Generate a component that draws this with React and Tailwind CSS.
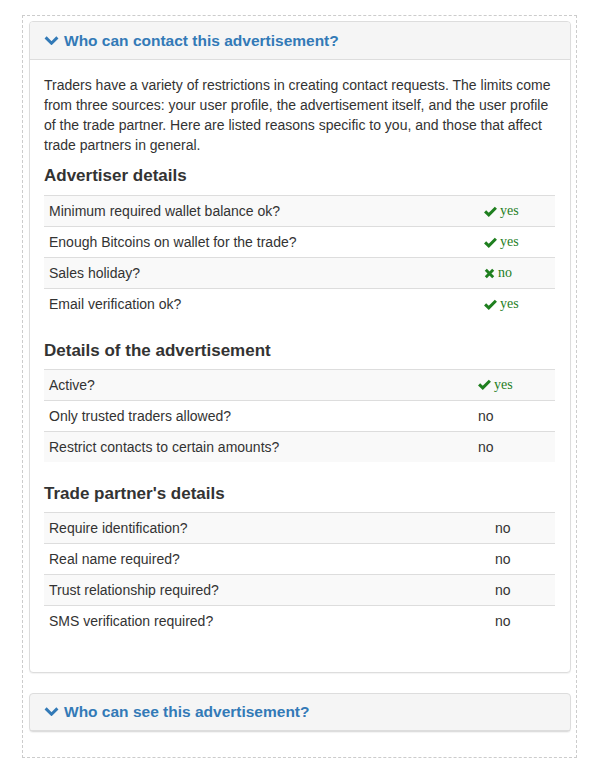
import React from 'react';

const advertiser = [
  { label: 'Minimum required wallet balance ok?', ok: true },
  { label: 'Enough Bitcoins on wallet for the trade?', ok: true },
  { label: 'Sales holiday?', ok: false },
  { label: 'Email verification ok?', ok: true },
];

const advertisement = [
  { label: 'Active?', ok: true },
  { label: 'Only trusted traders allowed?', plain: 'no' },
  { label: 'Restrict contacts to certain amounts?', plain: 'no' },
];

const partner = [
  { label: 'Require identification?', plain: 'no' },
  { label: 'Real name required?', plain: 'no' },
  { label: 'Trust relationship required?', plain: 'no' },
  { label: 'SMS verification required?', plain: 'no' },
];

function Chevron() {
  return (
    <svg width="15" height="9" viewBox="0 0 15 9" className="shrink-0">
      <path d="M1.6 1.4 L7.5 7.2 L13.4 1.4" fill="none" stroke="#337ab7" strokeWidth="3" />
    </svg>
  );
}

function Status({ ok }) {
  return (
    <span className="inline-flex items-center gap-[3px] h-[20px] align-top text-[#1f7f1f] font-['Liberation_Serif',serif] text-[14px] leading-[20px]">
      {ok ? (
        <svg width="13" height="11" viewBox="0 0 13 11">
          <path d="M1.1 5.3 L4.8 8.9 L11.9 1.7" fill="none" stroke="#1f7f1f" strokeWidth="3" />
        </svg>
      ) : (
        <svg width="11" height="11" viewBox="0 0 11 11">
          <path d="M1.8 1.8 L9.2 9.2 M9.2 1.8 L1.8 9.2" fill="none" stroke="#1f7f1f" strokeWidth="2.9" />
        </svg>
      )}
      {ok ? 'yes' : 'no'}
    </span>
  );
}

function DetailTable({ rows, colWidth, gap = 'mb-[20px]' }) {
  return (
    <table className={`w-full border-collapse ${gap}`}>
      <tbody>
        {rows.map((r, i) => (
          <tr key={r.label} className={i % 2 === 0 ? 'bg-[#f9f9f9]' : 'bg-white'}>
            <td className="border-t border-[#ddd] px-[5px] py-[5px] h-[31px] leading-[20px]">{r.label}</td>
            <td className="border-t border-[#ddd] px-[5px] py-[5px] h-[31px] leading-[20px]" style={{ width: colWidth }}>
              {r.plain ? r.plain : <Status ok={r.ok} />}
            </td>
          </tr>
        ))}
      </tbody>
    </table>
  );
}

export default function App() {
  return (
    <div className="pl-[22px] pt-[15px] pb-[20px] bg-white font-['Liberation_Sans',Arial,sans-serif] text-[14px] text-[#333]">
      <div className="w-[555px] border border-dashed border-[#ccc] pl-[6px] pr-[5px] pt-[5px] pb-[25px]">

        {/* Expanded panel */}
        <div className="rounded-[4px] border border-[#ddd] bg-white shadow-[0_1px_1px_rgba(0,0,0,0.05)]">
          <div className="flex items-center gap-[5px] bg-[#f5f5f5] border-b border-[#ddd] rounded-t-[3px] px-[14px] py-[10px] h-[38px]">
            <Chevron />
            <span className="text-[#337ab7] text-[15.5px] font-bold leading-[18px]">Who can contact this advertisement?</span>
          </div>

          <div className="pl-[14px] pr-[15px] pt-[15px] pb-[15px]">
            <p className="leading-[20px] mb-[10px]">
              Traders have a variety of restrictions in creating contact requests. The limits come<br />
              from three sources: your user profile, the advertisement itself, and the user profile<br />
              of the trade partner. Here are listed reasons specific to you, and those that affect<br />
              trade partners in general.
            </p>

            <h4 className="text-[17px] font-bold leading-[20px] pt-[1px] mb-[9px] text-[#333]">Advertiser details</h4>
            <DetailTable rows={advertiser} colWidth="76px" gap="mb-[19px]" />

            <h4 className="text-[17px] font-bold leading-[20px] pt-[2px] mb-[8px] text-[#333]">Details of the advertisement</h4>
            <DetailTable rows={advertisement} colWidth="82px" />

            <h4 className="text-[17px] font-bold leading-[20px] pt-[2px] mb-[8px] text-[#333]">Trade partner's details</h4>
            <DetailTable rows={partner} colWidth="65px" />
          </div>
        </div>

        {/* Collapsed panel */}
        <div className="mt-[20px] rounded-[4px] border border-[#ddd] bg-[#f5f5f5] shadow-[0_1px_1px_rgba(0,0,0,0.05)]">
          <div className="flex items-center gap-[5px] border-b border-[#ddd] px-[14px] py-[10px] h-[37px]">
            <Chevron />
            <span className="text-[#337ab7] text-[15.5px] font-bold leading-[18px]">Who can see this advertisement?</span>
          </div>
        </div>

      </div>
    </div>
  );
}
